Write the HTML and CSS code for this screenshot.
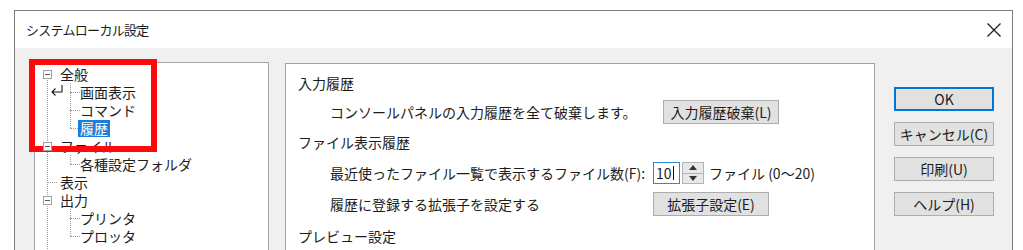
FILE: index.html
```html
<!DOCTYPE html>
<html lang="ja">
<head>
<meta charset="utf-8">
<title>システムローカル設定</title>
<link rel="stylesheet" href="styles.css">
</head>
<body>
<div class="dialog">
  <div class="titlebar">
    <span class="title">システムローカル設定</span>
    <svg class="close" width="14" height="14" viewBox="0 0 14 14"><path d="M0.5 0.5 L13.5 13.5 M13.5 0.5 L0.5 13.5" stroke="#1a1a1a" stroke-width="1.2" fill="none"/></svg>
  </div>
  <div class="body">
    <div class="tree-panel">
      <div class="tree">
        <div class="item"><span class="lead"><span class="box"></span></span><span class="label">全般</span></div>
        <div class="sub">
          <div class="item"><span class="tick"></span><span class="label">画面表示</span></div>
          <div class="item"><span class="tick"></span><span class="label">コマンド</span></div>
          <div class="item"><span class="tick"></span><span class="label sel">履歴</span></div>
        </div>
        <div class="item"><span class="lead"><span class="box"></span></span><span class="label">ファイル</span></div>
        <div class="sub">
          <div class="item"><span class="tick"></span><span class="label">各種設定フォルダ</span></div>
        </div>
        <div class="item"><span class="lead"><span class="rtick"></span></span><span class="label">表示</span></div>
        <div class="item"><span class="lead"><span class="box"></span></span><span class="label">出力</span></div>
        <div class="sub">
          <div class="item"><span class="tick"></span><span class="label">プリンタ</span></div>
          <div class="item"><span class="tick"></span><span class="label">プロッタ</span></div>
        </div>
      </div>
    </div>

    <div class="content-panel">
      <div class="heading">入力履歴</div>
      <div class="row r1">
        <span class="label-text w1">コンソールパネルの入力履歴を全て破棄します。</span>
        <button class="btn b-wide">入力履歴破棄(L)</button>
      </div>
      <div class="heading h2">ファイル表示履歴</div>
      <div class="row r2">
        <span class="label-text w2">最近使ったファイル一覧で表示するファイル数(F):</span>
        <span class="num-input">10<span class="caret"></span></span>
        <span class="spin">
          <span class="spin-half"><svg width="8" height="5" viewBox="0 0 8 5"><path d="M0 5 L4 0 L8 5 Z" fill="#333"/></svg></span>
          <span class="spin-half"><svg width="8" height="5" viewBox="0 0 8 5"><path d="M0 0 L4 5 L8 0 Z" fill="#333"/></svg></span>
        </span>
        <span class="unit">ファイル (0〜20)</span>
      </div>
      <div class="row r3">
        <span class="label-text w2">履歴に登録する拡張子を設定する</span>
        <button class="btn b-wide">拡張子設定(E)</button>
      </div>
      <div class="heading h3">プレビュー設定</div>
    </div>

    <div class="buttons">
      <button class="btn side default">OK</button>
      <button class="btn side">キャンセル(C)</button>
      <button class="btn side">印刷(U)</button>
      <button class="btn side">ヘルプ(H)</button>
    </div>

    <div class="mark-frame"></div>
    <svg class="cursor" width="14" height="12" viewBox="0 0 14 12"><path d="M12 1 V8 H2 M5.5 4.5 L2 8 L5.5 11.5" stroke="#1a1a1a" stroke-width="1.1" fill="none"/></svg>
  </div>
</div>
</body>
</html>
```

FILE: styles.css
```css
html, body {
  margin: 0;
  padding: 0;
  background: #ffffff;
  overflow: hidden;
  height: 250px;
}

body {
  font-family: "Noto Sans CJK JP", "Noto Sans", sans-serif;
  color: #1c1c1c;
  font-size: 14px;
}

.dialog {
  margin: 10px 0 0 14px;
  width: 997px;
  height: 239px;
  overflow: hidden;
  border: 1px solid #7c7c7c;
  border-bottom: none;
  background: #f0f0f0;
}

.titlebar {
  height: 37px;
  background: #ffffff;
  display: flex;
  align-items: center;
  justify-content: space-between;
  padding: 0 11px 0 11px;
}

.title {
  font-size: 13px;
  letter-spacing: -0.7px;
  line-height: 1;
}

.close {
  display: block;
  margin-top: 1px;
}

.body {
  position: relative;
  display: flex;
  align-items: flex-start;
  padding: 15px 0 0 19px;
}

/* ---------- tree ---------- */
.tree-panel {
  width: 233px;
  height: 200px;
  margin-top: -1px;
  background: #ffffff;
  border: 1px solid #a3a3a3;
  flex: none;
}

.tree {
  position: relative;
  padding: 2px 0 0 8px;
}

.tree::before {
  content: "";
  position: absolute;
  left: 12px;
  top: 12px;
  bottom: -40px;
  border-left: 1px dotted #9a9a9a;
}

.item {
  height: 18px;
  display: flex;
  align-items: center;
  white-space: nowrap;
  line-height: 17px;
}

.lead {
  width: 17px;
  height: 18px;
  flex: none;
  display: flex;
  align-items: center;
  position: relative;
}

.box {
  position: relative;
  z-index: 1;
  width: 7px;
  height: 7px;
  border: 1px solid #a0a0a0;
  background: #ffffff;
}

.box::after {
  content: "";
  position: absolute;
  left: 1px;
  right: 1px;
  top: 3px;
  border-top: 1px solid #5a5a5a;
}

.rtick {
  margin-left: 5px;
  width: 9px;
  border-top: 1px dotted #9a9a9a;
}

.sub {
  position: relative;
  padding-left: 22px;
}

.sub::before {
  content: "";
  position: absolute;
  left: 27px;
  top: 0;
  height: calc(100% - 9px);
  border-left: 1px dotted #9a9a9a;
}

.tick {
  flex: none;
  margin-left: 5px;
  width: 10px;
  border-top: 1px dotted #9a9a9a;
}

.label.sel {
  margin-left: -2px;
  padding: 0 2px;
  background: #1a7fdb;
  color: #ffffff;
  height: 17px;
}

/* ---------- content ---------- */
.content-panel {
  width: 576px;
  height: 200px;
  margin-left: 16px;
  background: #ffffff;
  border: 1px solid #a3a3a3;
  padding: 9px 0 0 12px;
  box-sizing: content-box;
  flex: none;
}

.heading {
  height: 20px;
  line-height: 20px;
}

.heading.h2 {
  margin-top: 8px;
}

.heading.h3 {
  margin-top: 10px;
}

.row {
  display: flex;
  align-items: center;
  padding-left: 32px;
  white-space: nowrap;
}

.row.r1 {
  height: 24px;
  margin-top: 7px;
}

.row.r2 {
  height: 22px;
  margin-top: 10px;
}

.row.r3 {
  height: 24px;
  margin-top: 8px;
}

.label-text.w1 {
  width: 333px;
}

.label-text.w2 {
  width: 323px;
}

.btn {
  font-family: "Noto Sans CJK JP", "Noto Sans", sans-serif;
  font-size: 14px;
  color: #1c1c1c;
  background: #e1e1e1;
  border: 1px solid #adadad;
  padding: 0;
  margin: 0;
  line-height: 20px;
  box-sizing: border-box;
}

.btn.b-wide {
  width: 116px;
  height: 24px;
}

.num-input {
  width: 27px;
  height: 22px;
  box-sizing: border-box;
  border: 1px solid #2f86d6;
  background: #ffffff;
  display: flex;
  align-items: center;
  padding-left: 2px;
  line-height: 1;
}

.caret {
  display: inline-block;
  width: 1px;
  height: 14px;
  background: #111;
  margin-left: 1px;
}

.spin {
  margin-left: 2px;
  width: 22px;
  height: 22px;
  box-sizing: border-box;
  border: 1px solid #b4b4b4;
  background: #e8e8e8;
  display: flex;
  flex-direction: column;
}

.spin-half {
  flex: 1;
  display: flex;
  align-items: center;
  justify-content: center;
}

.spin-half + .spin-half {
  border-top: 1px solid #b4b4b4;
}

.spin-half svg {
  display: block;
}

.unit {
  margin-left: 5px;
}

/* ---------- side buttons ---------- */
.buttons {
  margin-left: 19px;
  padding-top: 24px;
  width: 100px;
  display: flex;
  flex-direction: column;
  gap: 11px;
  flex: none;
}

.btn.side {
  width: 100px;
  height: 24px;
}

.btn.default {
  border: 1px solid #0078d7;
  box-shadow: inset 0 0 0 1px #0078d7;
}

/* ---------- overlays ---------- */
.mark-frame {
  position: absolute;
  left: 14px;
  top: 11px;
  width: 116px;
  height: 81px;
  border: 6px solid #ff0a0a;
}

.cursor {
  position: absolute;
  left: 35px;
  top: 36px;
}
```
